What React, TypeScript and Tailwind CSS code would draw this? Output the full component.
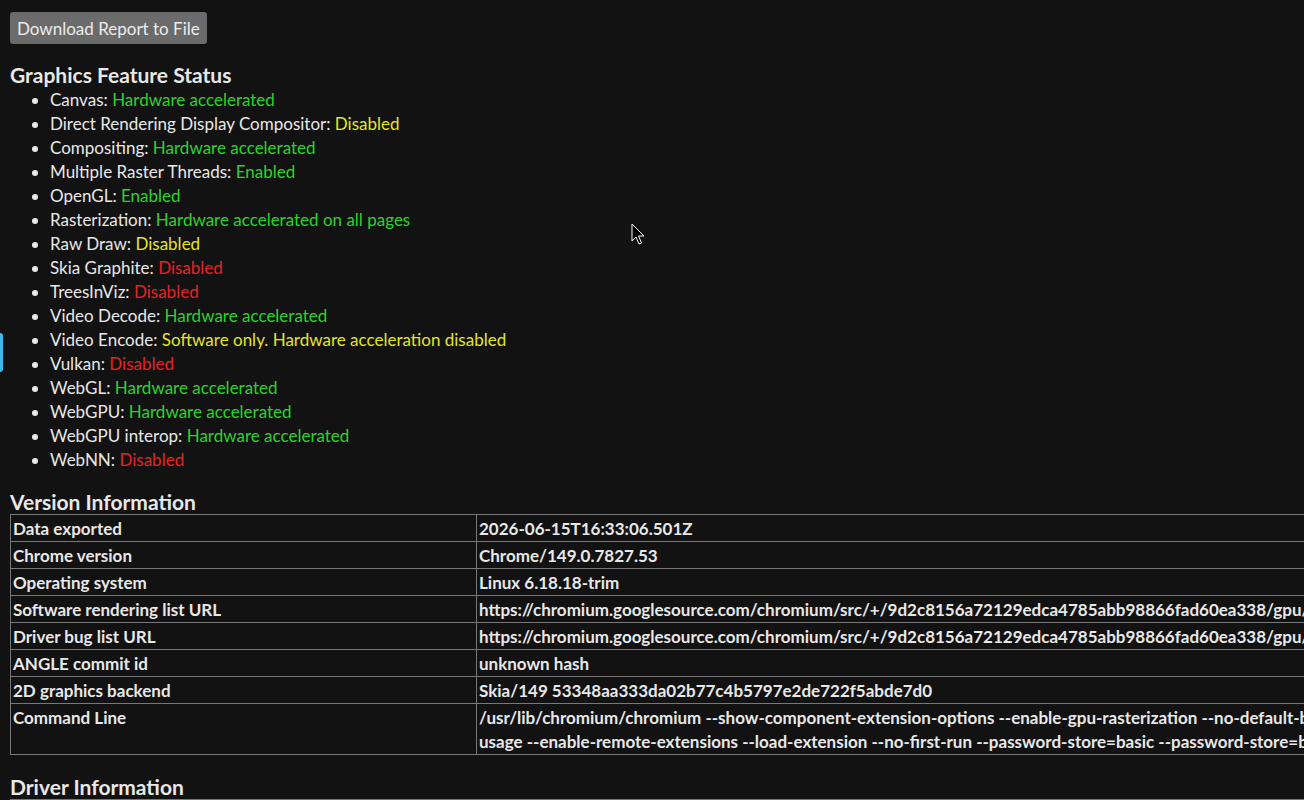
import React from 'react';

type Status = 'green' | 'yellow' | 'red';

const features: { name: string; value: string; status: Status }[] = [
  { name: 'Canvas', value: 'Hardware accelerated', status: 'green' },
  { name: 'Direct Rendering Display Compositor', value: 'Disabled', status: 'yellow' },
  { name: 'Compositing', value: 'Hardware accelerated', status: 'green' },
  { name: 'Multiple Raster Threads', value: 'Enabled', status: 'green' },
  { name: 'OpenGL', value: 'Enabled', status: 'green' },
  { name: 'Rasterization', value: 'Hardware accelerated on all pages', status: 'green' },
  { name: 'Raw Draw', value: 'Disabled', status: 'yellow' },
  { name: 'Skia Graphite', value: 'Disabled', status: 'red' },
  { name: 'TreesInViz', value: 'Disabled', status: 'red' },
  { name: 'Video Decode', value: 'Hardware accelerated', status: 'green' },
  { name: 'Video Encode', value: 'Software only. Hardware acceleration disabled', status: 'yellow' },
  { name: 'Vulkan', value: 'Disabled', status: 'red' },
  { name: 'WebGL', value: 'Hardware accelerated', status: 'green' },
  { name: 'WebGPU', value: 'Hardware accelerated', status: 'green' },
  { name: 'WebGPU interop', value: 'Hardware accelerated', status: 'green' },
  { name: 'WebNN', value: 'Disabled', status: 'red' },
];

const statusColor: Record<Status, string> = {
  green: 'text-[#2bd22b]',
  yellow: 'text-[#e4e42a]',
  red: 'text-[#e52222]',
};

const versionRows: { label: string; value: React.ReactNode }[] = [
  { label: 'Data exported', value: '2026-06-15T16:33:06.501Z' },
  { label: 'Chrome version', value: 'Chrome/149.0.7827.53' },
  { label: 'Operating system', value: 'Linux 6.18.18-trim' },
  {
    label: 'Software rendering list URL',
    value:
      'https://chromium.googlesource.com/chromium/src/+/9d2c8156a72129edca4785abb98866fad60ea338/gpu/config/software_rendering_list.json',
  },
  {
    label: 'Driver bug list URL',
    value:
      'https://chromium.googlesource.com/chromium/src/+/9d2c8156a72129edca4785abb98866fad60ea338/gpu/config/gpu_driver_bug_list.json',
  },
  { label: 'ANGLE commit id', value: 'unknown hash' },
  { label: '2D graphics backend', value: 'Skia/149 53348aa333da02b77c4b5797e2de722f5abde7d0' },
  {
    label: 'Command Line',
    value: (
      <>
        /usr/lib/chromium/chromium --show-component-extension-options --enable-gpu-rasterization --no-default-browser-check --disable-pings --media-router=0 --disable-dev-shm-
        <br />
        usage --enable-remote-extensions --load-extension --no-first-run --password-store=basic --password-store=basic --flag-switches-begin --flag-switches-end
      </>
    ),
  },
];

const Cell: React.FC<{ children: React.ReactNode; className?: string }> = ({ children, className = '' }) => (
  <td className={`border border-[#787878] px-[2px] pt-[2px] pb-0 align-top font-bold leading-6 ${className}`}>{children}</td>
);

export default function App() {
  return (
    <div
      className="relative min-h-[800px] w-[1304px] overflow-hidden bg-[#121212] text-[17px] text-[#e8e8e8]"
      style={{ fontFamily: '"Lato", "Noto Sans", sans-serif' }}
    >
      <div className="px-[10px] pt-[12px]">
        <button
          type="button"
          className="h-8 rounded-[3px] bg-[#6b6b6b] px-[7px] pt-[1px] text-[17px] text-[#ececec]"
        >
          Download Report to File
        </button>

        {/* Graphics feature status */}
        <h3 className="mt-[19px] text-[21px] font-bold leading-6">Graphics Feature Status</h3>
        <ul className="mt-[1px] list-disc pl-[40px] leading-6">
          {features.map((f) => (
            <li key={f.name}>
              {f.name}: <span className={statusColor[f.status]}>{f.value}</span>
            </li>
          ))}
        </ul>

        {/* Version information */}
        <h3 className="mt-[18px] text-[21px] font-bold leading-6">Version Information</h3>
        <table className="w-[2400px] table-fixed border-collapse">
          <colgroup>
            <col className="w-[466px]" />
            <col />
          </colgroup>
          <tbody>
            {versionRows.map((r) => (
              <tr key={r.label}>
                <Cell>{r.label}</Cell>
                <Cell className="whitespace-nowrap">{r.value}</Cell>
              </tr>
            ))}
          </tbody>
        </table>

        <h3 className="mt-[20px] text-[21px] font-bold leading-6">Driver Information</h3>
        <table className="w-[2400px] table-fixed border-collapse">
          <colgroup>
            <col className="w-[466px]" />
            <col />
          </colgroup>
          <tbody>
            <tr>
              <Cell>Initialization time</Cell>
              <Cell>1</Cell>
            </tr>
          </tbody>
        </table>
      </div>

      {/* focus marker on the left edge */}
      <div className="absolute left-0 top-[333px] h-[39px] w-[3px] rounded-r-sm bg-[#3cb8ea]" />

      {/* mouse pointer */}
      <svg className="absolute left-[631px] top-[223px]" width="14" height="24" viewBox="0 0 14 24">
        <path
          d="M1 1 L1 18 L5 14 L8 21 L10.5 20 L7.5 13 L13 13 Z"
          fill="#000"
          stroke="#fff"
          strokeWidth="1"
          strokeLinejoin="round"
        />
      </svg>
    </div>
  );
}
